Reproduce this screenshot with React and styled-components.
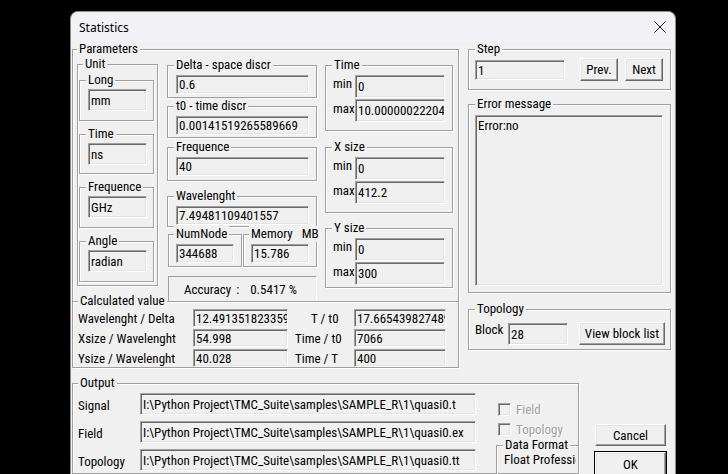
import React from 'react';
import styled, { createGlobalStyle } from 'styled-components';

const FONT = '"Roboto Condensed", Roboto, "Liberation Sans", sans-serif';

const GlobalStyle = createGlobalStyle`
  html, body { margin: 0; padding: 0; background: #000; overflow: hidden; }
  body {
    width: 728px; height: 474px;
    font-family: ${FONT};
    font-stretch: condensed;
    font-size: 13px;
    color: #000;
  }
`;

const Dialog = styled.div`
  margin: 11px 0 0 70px;
  width: 606px;
  height: 470px;
  box-sizing: border-box;
  border: 1px solid #8c8c8c;
  border-bottom: none;
  border-radius: 8px 8px 0 0;
  background: #f0f0f0;
  overflow: hidden;
  display: flex;
  flex-direction: column;
`;

const TitleBar = styled.div`
  height: 30px;
  flex: none;
  display: flex;
  align-items: center;
  justify-content: space-between;
  padding: 0 8px 0 8px;
  background: #f2f2f6;
`;

const Title = styled.span`
  font-family: "Noto Sans", "Open Sans", sans-serif;
  font-stretch: normal;
  font-size: 12px;
  color: #000;
`;

const CloseIcon = styled.svg`
  display: block;
  margin-right: 1px;
`;

const Body = styled.div`
  padding: 7px 0 0 1px;
  display: flex;
  flex-direction: column;
`;

const TopRow = styled.div`
  display: flex;
  align-items: flex-start;
  gap: 9px;
`;

const Column = styled.div`
  display: flex;
  flex-direction: column;
  margin-left: ${p => p.$ml || 0}px;
`;

const Group = styled.div`
  position: relative;
  box-sizing: border-box;
  flex: none;
  width: ${p => p.$w}px;
  height: ${p => p.$h}px;
  margin-top: ${p => p.$mt || 0}px;
  margin-left: ${p => p.$ml || 0}px;
  border: 1px solid #a0a0a0;
  box-shadow: inset 1px 1px 0 #fff, 1px 1px 0 #fff;
`;

const Legend = styled.span`
  position: absolute;
  top: -9px;
  left: ${p => (p.$x ?? 6)}px;
  padding: 0 2px;
  background: #f0f0f0;
  line-height: 16px;
  white-space: pre;
`;

const GroupBody = styled.div`
  padding: ${p => p.$t || 0}px 0 0 ${p => p.$l || 0}px;
`;

const Edit = styled.div`
  box-sizing: border-box;
  width: ${p => p.$w}px;
  height: ${p => p.$h}px;
  border: 1px solid;
  border-color: #a0a0a0 #fff #fff #a0a0a0;
  box-shadow: inset 1px 1px 0 #696969, inset -1px -1px 0 #e3e3e3;
  background: #f0f0f0;
  padding-left: 2px;
  display: flex;
  align-items: center;
  white-space: nowrap;
  overflow: hidden;
`;

const Memo = styled(Edit)`
  align-items: flex-start;
  padding-top: 2px;
  line-height: 16px;
`;

const ParamsInner = styled.div`
  display: flex;
  align-items: flex-start;
  padding: 14px 0 0 4px;
`;

const UnitStack = styled.div`
  display: flex;
  flex-direction: column;
  gap: 13px;
  padding: 15px 0 0 1px;
`;

const NumRow = styled.div`
  display: flex;
  gap: 1px;
  margin: 7px 0 0 1px;
`;

const AccuracyPanel = styled.div`
  box-sizing: border-box;
  width: 149px;
  height: 26px;
  margin: 9px 0 0 1px;
  border: 1px solid;
  border-color: #a0a0a0 #fff #fff #a0a0a0;
  display: flex;
  align-items: center;
  padding-left: 15px;
  white-space: nowrap;
`;

const AccColon = styled.span`
  margin-left: 5px;
`;

const AccValue = styled.span`
  margin-left: 11px;
`;

const RangeGrid = styled.div`
  display: grid;
  grid-template-columns: 22px 90px;
  grid-auto-rows: 23px;
  row-gap: 1px;
  padding: 9px 0 0 7px;
`;

const RangeLabel = styled.span`
  line-height: 16px;
  padding-top: ${p => p.$pt || 0}px;
`;

const CalcGrid = styled.div`
  display: grid;
  grid-template-columns: 115px 95px 66px 92px;
  grid-auto-rows: 18px;
  row-gap: 2px;
  padding: 7px 0 0 5px;
  align-items: center;
`;

const CalcLabel = styled.span`
  white-space: nowrap;
  padding-left: ${p => p.$indent || 0}px;
`;

const StepRow = styled.div`
  display: flex;
  align-items: flex-start;
  padding: 10px 0 0 6px;
`;

const Button = styled.div`
  box-sizing: border-box;
  flex: none;
  width: ${p => p.$w}px;
  height: ${p => p.$h}px;
  margin: ${p => p.$mt || 0}px 0 0 ${p => p.$ml || 0}px;
  background: #f0f0f0;
  border: 1px solid;
  border-color: #fff #696969 #696969 #fff;
  box-shadow: inset -1px -1px 0 #a0a0a0, inset 1px 1px 0 #e3e3e3;
  display: flex;
  align-items: center;
  justify-content: center;
  white-space: nowrap;
`;

const DefaultButton = styled(Button)`
  box-shadow: inset -1px -1px 0 #a0a0a0, inset 1px 1px 0 #e3e3e3, 0 0 0 1px #000;
`;

const TopoRow = styled.div`
  display: flex;
  align-items: flex-start;
  padding: 13px 0 0 6px;
`;

const FieldLabel = styled.span`
  width: ${p => p.$w}px;
  flex: none;
  line-height: 16px;
  margin-top: -1px;
`;

const BottomRow = styled.div`
  display: flex;
  align-items: flex-start;
  margin-top: 15px;
`;

const OutputInner = styled.div`
  display: flex;
  align-items: flex-start;
  padding: 9px 0 0 5px;
`;

const OutputGrid = styled.div`
  display: grid;
  grid-template-columns: 62px 336px;
  grid-auto-rows: 22px;
  row-gap: 6px;
  align-items: center;
`;

const OutputLabel = styled.span`
  padding-top: 3px;
`;

const SideCol = styled.div`
  display: flex;
  flex-direction: column;
  margin-left: 20px;
`;

const CheckRow = styled.div`
  display: flex;
  align-items: center;
  gap: 5px;
  height: 13px;
  margin: ${p => p.$mt}px 0 0 2px;
  color: #a0a0a0;
  text-shadow: 1px 1px 0 #fff;
`;

const CheckBox = styled.span`
  box-sizing: border-box;
  width: 13px;
  height: 13px;
  flex: none;
  border: 1px solid;
  border-color: #a0a0a0 #fff #fff #a0a0a0;
  box-shadow: inset 1px 1px 0 #696969, inset -1px -1px 0 #e3e3e3;
  background: #f0f0f0;
`;

const Clipped = styled.div`
  width: 72px;
  overflow: hidden;
  white-space: nowrap;
  padding: 6px 0 0 7px;
  line-height: 16px;
`;

const ButtonCol = styled.div`
  display: flex;
  flex-direction: column;
  margin-left: 16px;
`;

const units = [
  { label: 'Long', value: 'mm', h: 41 },
  { label: 'Time', value: 'ns', h: 40 },
  { label: 'Frequence', value: 'GHz', h: 41 },
  { label: 'Angle', value: 'radian', h: 41 },
];

const midGroups = [
  { label: 'Delta - space discr', value: '0.6', mt: 1, h: 33 },
  { label: 't0 - time discr', value: '0.00141519265589669', mt: 8, h: 32 },
  { label: 'Frequence', value: '40', mt: 9, h: 34 },
  { label: 'Wavelenght', value: '7.49481109401557', mt: 15, h: 31 },
];

const ranges = [
  { label: 'Time', min: '0', max: '10.0000002220446', mt: 1, h: 66 },
  { label: 'X size', min: '0', max: '412.2', mt: 16, h: 66 },
  { label: 'Y size', min: '0', max: '300', mt: 15, h: 60 },
];

const calcRows = [
  ['Wavelenght / Delta', '12.4913518233593', 'T / t0', '17.6654398274893', 16],
  ['Xsize / Wavelenght', '54.998', 'Time / t0', '7066', 0],
  ['Ysize / Wavelenght', '40.028', 'Time / T', '400', 0],
];

const base = 'I:\\Python Project\\TMC_Suite\\samples\\SAMPLE_R\\1\\';
const outputs = [
  ['Signal', base + 'quasi0.t'],
  ['Field', base + 'quasi0.ex'],
  ['Topology', base + 'quasi0.tt'],
];

export default function App() {
  return (
    <>
      <GlobalStyle />
      <Dialog>
        <TitleBar>
          <Title>Statistics</Title>
          <CloseIcon width="12" height="12" viewBox="0 0 12 12">
            <path d="M0.5 0.5 L11.5 11.5 M11.5 0.5 L0.5 11.5" stroke="#1a1a1a" strokeWidth="1" fill="none" />
          </CloseIcon>
        </TitleBar>
        <Body>
          <TopRow>
            <Column>
              <Group $w={387} $h={253}>
                <Legend $x={4}>Parameters</Legend>
                <ParamsInner>
                  <Group $w={81} $h={222}>
                    <Legend $x={5}>Unit</Legend>
                    <UnitStack>
                      {units.map(u => (
                        <Group key={u.label} $w={75} $h={u.h}>
                          <Legend>{u.label}</Legend>
                          <GroupBody $t={8} $l={8}>
                            <Edit $w={59} $h={22}>{u.value}</Edit>
                          </GroupBody>
                        </Group>
                      ))}
                    </UnitStack>
                  </Group>
                  <Column $ml={9}>
                    {midGroups.map(g => (
                      <Group key={g.label} $w={150} $h={g.h} $mt={g.mt}>
                        <Legend>{g.label}</Legend>
                        <GroupBody $t={9} $l={8}>
                          <Edit $w={133} $h={19}>{g.value}</Edit>
                        </GroupBody>
                      </Group>
                    ))}
                    <NumRow>
                      <Group $w={74} $h={33}>
                        <Legend $x={5}>NumNode</Legend>
                        <GroupBody $t={9} $l={7}>
                          <Edit $w={58} $h={19}>344688</Edit>
                        </GroupBody>
                      </Group>
                      <Group $w={74} $h={33}>
                        <Legend $x={5}>{'Memory   MB'}</Legend>
                        <GroupBody $t={9} $l={7}>
                          <Edit $w={58} $h={19}>15.786</Edit>
                        </GroupBody>
                      </Group>
                    </NumRow>
                    <AccuracyPanel>
                      <span>Accuracy</span>
                      <AccColon>:</AccColon>
                      <AccValue>0.5417 %</AccValue>
                    </AccuracyPanel>
                  </Column>
                  <Column $ml={8}>
                    {ranges.map(r => (
                      <Group key={r.label} $w={128} $h={r.h} $mt={r.mt}>
                        <Legend>{r.label}</Legend>
                        <RangeGrid>
                          <RangeLabel $pt={1}>min</RangeLabel>
                          <Edit $w={90} $h={23}>{r.min}</Edit>
                          <RangeLabel $pt={2}>max</RangeLabel>
                          <Edit $w={90} $h={23}>{r.max}</Edit>
                        </RangeGrid>
                      </Group>
                    ))}
                  </Column>
                </ParamsInner>
              </Group>
              <Group $w={387} $h={67} $mt={-1}>
                <Legend $x={5}>Calculated value</Legend>
                <CalcGrid>
                  {calcRows.map(r => (
                    <React.Fragment key={r[0]}>
                      <CalcLabel>{r[0]}</CalcLabel>
                      <Edit $w={95} $h={18}>{r[1]}</Edit>
                      <CalcLabel $indent={7 + r[4]}>{r[2]}</CalcLabel>
                      <Edit $w={92} $h={18}>{r[3]}</Edit>
                    </React.Fragment>
                  ))}
                </CalcGrid>
              </Group>
            </Column>
            <Column>
              <Group $w={203} $h={41}>
                <Legend>Step</Legend>
                <StepRow>
                  <Edit $w={90} $h={20}>1</Edit>
                  <Button $w={38} $h={23} $mt={-2} $ml={15}>Prev.</Button>
                  <Button $w={38} $h={23} $mt={-2} $ml={7}>Next</Button>
                </StepRow>
              </Group>
              <Group $w={203} $h={189} $mt={14}>
                <Legend>Error message</Legend>
                <GroupBody $t={10} $l={6}>
                  <Memo $w={188} $h={171}>Error:no</Memo>
                </GroupBody>
              </Group>
              <Group $w={203} $h={41} $mt={16}>
                <Legend>Topology</Legend>
                <TopoRow>
                  <FieldLabel $w={33}>Block</FieldLabel>
                  <Edit $w={60} $h={22}>28</Edit>
                  <Button $w={86} $h={23} $mt={-1} $ml={11}>View block list</Button>
                </TopoRow>
              </Group>
            </Column>
          </TopRow>
          <BottomRow>
            <Group $w={507} $h={91}>
              <Legend $x={5}>Output</Legend>
              <OutputInner>
                <OutputGrid>
                  {outputs.map(o => (
                    <React.Fragment key={o[0]}>
                      <OutputLabel>{o[0]}</OutputLabel>
                      <Edit $w={336} $h={22}>{o[1]}</Edit>
                    </React.Fragment>
                  ))}
                </OutputGrid>
                <SideCol>
                  <CheckRow $mt={10}>
                    <CheckBox />
                    <span>Field</span>
                  </CheckRow>
                  <CheckRow $mt={7}>
                    <CheckBox />
                    <span>Topology</span>
                  </CheckRow>
                  <Group $w={83} $h={30} $mt={9}>
                    <Legend>Data Format</Legend>
                    <Clipped>Float Professional</Clipped>
                  </Group>
                </SideCol>
              </OutputInner>
            </Group>
            <ButtonCol>
              <Button $w={71} $h={22} $mt={41}>Cancel</Button>
              <DefaultButton $w={71} $h={24} $mt={6}>OK</DefaultButton>
            </ButtonCol>
          </BottomRow>
        </Body>
      </Dialog>
    </>
  );
}
